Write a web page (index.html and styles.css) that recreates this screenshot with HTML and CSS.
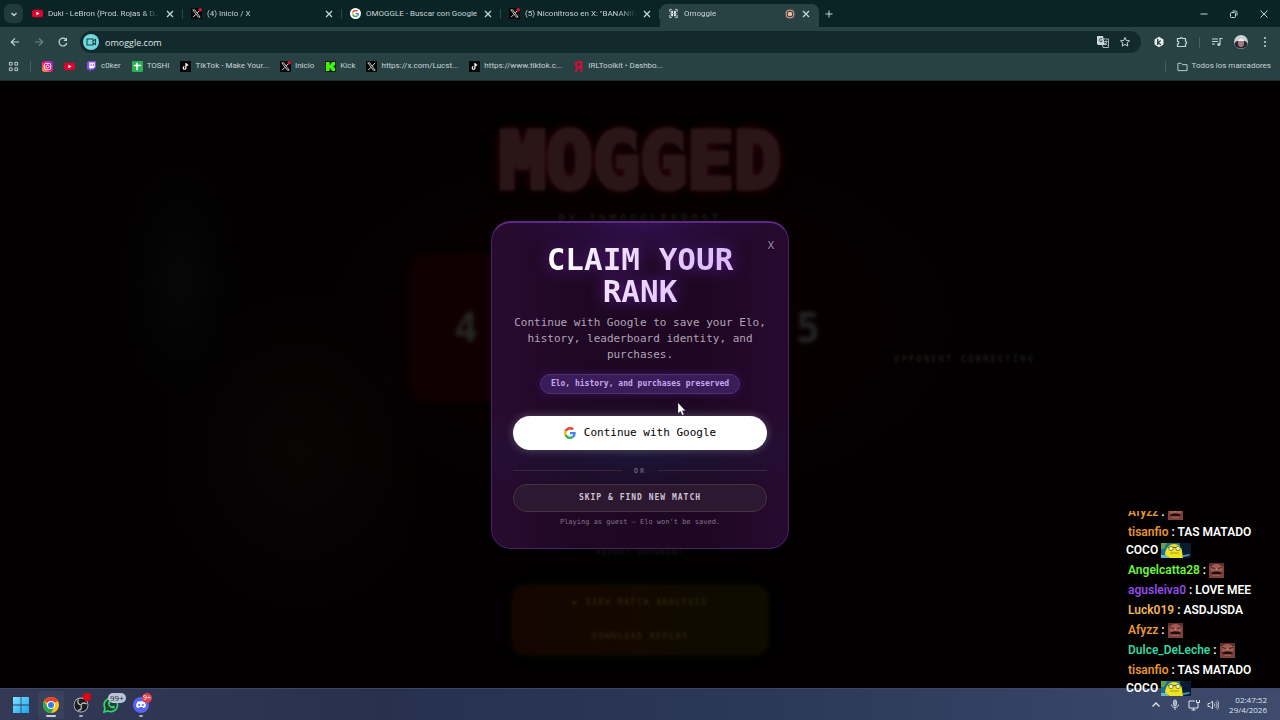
FILE: index.html
```
<!DOCTYPE html>
<html lang="es">
<head>
    <meta charset="UTF-8">
    <meta name="viewport" content="width=device-width, initial-scale=1.0">
    <title>Omoggle</title>
    <link rel="stylesheet" href="styles.css">
</head>
<body>
    <!-- Shared icons -->
    <svg class="sprite" aria-hidden="true">
        <symbol id="close" viewBox="0 0 12 12"><path d="M3 3l6 6M9 3l-6 6" fill="none" stroke="currentColor" stroke-width="1.3"/></symbol>
        <symbol id="x-logo" viewBox="0 0 12 12"><rect width="12" height="12" fill="#050505"/><path d="M2 2h2l6 8H8z" fill="none" stroke="#e8e8e8" stroke-width=".9"/><path d="M10 2L6.800 5.500M5.300 7L2.300 10" stroke="#e8e8e8" stroke-width="1"/></symbol>
        <symbol id="red-dot" viewBox="0 0 4 4"><circle cx="2" cy="2" r="2" fill="#e5123c"/></symbol>
        <symbol id="youtube" viewBox="0 0 12 12"><rect y="1.800" width="12" height="8.400" rx="2.200" fill="#e3002d"/><path d="M4.800 4v4l3.500-2z" fill="#fff"/></symbol>
        <symbol id="tiktok" viewBox="0 0 12 12"><rect width="12" height="12" fill="#050505"/><path d="M6.500 2.200v5.200a1.500 1.500 0 1 1-1.600-1.400M6.500 2.500c.2 1.300 1.200 2 2.500 2" fill="none" stroke="#fff" stroke-width="1.300"/></symbol>
        <symbol id="google" viewBox="0 0 48 48"><path fill="#EA4335" d="M24 9.500c3.540 0 6.710 1.220 9.210 3.600l6.850-6.850C35.900 2.380 30.470 0 24 0 14.620 0 6.510 5.380 2.560 13.220l7.980 6.190C12.430 13.720 17.740 9.500 24 9.500z"/><path fill="#4285F4" d="M46.980 24.550c0-1.570-.15-3.090-.38-4.550H24v9.020h12.940c-.58 2.960-2.260 5.480-4.780 7.180l7.730 6c4.510-4.180 7.090-10.360 7.090-17.650z"/><path fill="#FBBC05" d="M10.530 28.590c-.48-1.450-.76-2.990-.76-4.590s.27-3.140.76-4.590l-7.980-6.190C.92 16.460 0 20.120 0 24c0 3.880.92 7.540 2.560 10.780l7.970-6.190z"/><path fill="#34A853" d="M24 48c6.480 0 11.930-2.130 15.890-5.810l-7.730-6c-2.150 1.450-4.920 2.300-8.160 2.300-6.260 0-11.570-4.220-13.470-9.910l-7.980 6.190C6.510 42.620 14.620 48 24 48z"/></symbol>
        <symbol id="emote-face" viewBox="0 0 15 15"><rect width="15" height="15" fill="#7d403b"/><path d="M0 0h15v3H0z" fill="#5c2d2a"/><ellipse cx="7.500" cy="6" rx="6" ry="5" fill="#a35a50"/><path d="M2 4.500l4 1M13 4.500l-4 1" stroke="#4a2322"/><path d="M7.500 5v2.500" stroke="#c07a6b"/><path d="M2 10.500c1-3 10-3 11 0-3 .8-8 .8-11 0z" fill="#1c0e10"/><path d="M4 12.500h7" stroke="#a35a50"/></symbol>
        <symbol id="emote-bird" viewBox="0 0 30 15"><rect width="22" height="15" fill="#1c6f93"/><path d="M19 0h11v15H19z" fill="#071c33"/><path d="M0 0h6L3 6H0z" fill="#5fa34c"/><path d="M0 12h10l-3 3H0z" fill="#65b8c9"/><path d="M4 11C5 4 9 1 13 1s8 3 8 7l1 7H8c0-2-3-2-4-4z" fill="#efe321"/><path d="M22 12l7-1-1 2-6 1z" fill="#4692bd"/><path d="M7 4.500h13" stroke="#5c6230"/><circle cx="10" cy="5.500" r="2.200" fill="#eef2bd" stroke="#6d7026" stroke-width=".8"/><circle cx="17" cy="5.500" r="2.200" fill="#eef2bd" stroke="#6d7026" stroke-width=".8"/><path d="M9 10h9" fill="none" stroke="#a59e13"/></symbol>
    </svg>

    <header class="browser">
        <div class="tab-strip">
            <button class="tab-search" aria-label="Buscar pestañas"><svg viewBox="0 0 12 12"><path d="M3.500 5L6 7.500 8.500 5" fill="none" stroke="currentColor" stroke-width="1.400"/></svg></button>
            <div class="tab">
                <svg class="favicon"><use href="#youtube"/></svg>
                <a href="#" class="tab-title">Duki - LeBron (Prod. Rojas &amp; DJ</a>
                <button class="tab-close" aria-label="Cerrar"><svg><use href="#close"/></svg></button>
            </div>
            <div class="tab">
                <svg class="favicon" viewBox="0 0 12 12"><use href="#x-logo"/><use href="#red-dot" x="8" width="4" height="4"/></svg>
                <a href="#" class="tab-title">(4) Inicio / X</a>
                <button class="tab-close" aria-label="Cerrar"><svg><use href="#close"/></svg></button>
            </div>
            <div class="tab">
                <svg class="favicon" viewBox="0 0 12 12"><circle cx="6" cy="6" r="6" fill="#fff"/><use href="#google" x="2" y="2" width="8" height="8"/></svg>
                <a href="#" class="tab-title full">OMOGGLE - Buscar con Google</a>
                <button class="tab-close" aria-label="Cerrar"><svg><use href="#close"/></svg></button>
            </div>
            <div class="tab">
                <svg class="favicon" viewBox="0 0 12 12"><use href="#x-logo"/><use href="#red-dot" x="8" width="4" height="4"/></svg>
                <a href="#" class="tab-title">(5) Niconitroso en X: "BANANIR</a>
                <button class="tab-close" aria-label="Cerrar"><svg><use href="#close"/></svg></button>
            </div>
            <div class="tab active">
                <svg class="favicon" viewBox="0 0 12 12"><path d="M4 1.500H2v3M8 1.500h2v3M4 10.500H2v-3M8 10.500h2v-3" fill="none" stroke="#dbe5e5"/><path d="M4.500 3v6M7.500 3v6" stroke="#eef3f3" stroke-width="2"/><path d="M2 6h8" stroke="#9fb0b0"/></svg>
                <a href="#" class="tab-title">Omoggle</a>
                <svg class="recording" viewBox="0 0 10 10"><circle cx="5" cy="5" r="4" fill="none" stroke="#dda99c"/><circle cx="5" cy="5" r="2.300" fill="#f4b5a5"/></svg>
                <button class="tab-close" aria-label="Cerrar"><svg><use href="#close"/></svg></button>
            </div>
            <button class="new-tab" aria-label="Nueva pestaña"><svg viewBox="0 0 12 12"><path d="M6 2.500v7M2.500 6h7" stroke="currentColor"/></svg></button>
            <div class="window-buttons">
                <button aria-label="Minimizar"><svg viewBox="0 0 12 12"><path d="M2.500 6h7" stroke="currentColor"/></svg></button>
                <button aria-label="Restaurar"><svg viewBox="0 0 12 12"><rect x="2.500" y="4.500" width="5" height="5" rx="1" fill="none" stroke="currentColor"/><path d="M4.500 3h3a1.500 1.500 0 0 1 1.500 1.500v3" fill="none" stroke="currentColor"/></svg></button>
                <button aria-label="Cerrar ventana"><svg viewBox="0 0 12 12"><path d="M2.500 2.500l7 7M9.500 2.500l-7 7" stroke="currentColor"/></svg></button>
            </div>
        </div>

        <div class="toolbar">
            <button class="tool" aria-label="Atrás"><svg viewBox="0 0 12 12"><path d="M10 6H2.500M6 2.300L2.300 6 6 9.700" fill="none" stroke="currentColor" stroke-width="1.200"/></svg></button>
            <button class="tool dim" aria-label="Adelante"><svg viewBox="0 0 12 12"><path d="M2 6h7.500M6 2.300L9.700 6 6 9.700" fill="none" stroke="currentColor" stroke-width="1.200"/></svg></button>
            <button class="tool" aria-label="Recargar"><svg viewBox="0 0 12 12"><path d="M9.300 4A3.900 3.900 0 1 0 9.800 7" fill="none" stroke="currentColor" stroke-width="1.200"/><path d="M10 1.500V5H6.500z" fill="currentColor"/></svg></button>
            <div class="omnibox">
                <button class="site-info" aria-label="Cámara en uso"><svg viewBox="0 0 12 12"><path d="M2 3h6v6H2zM8 5l2.500-1.500v5L8 7" fill="none" stroke="currentColor" stroke-width="1.100"/></svg></button>
                <input type="text" class="address" aria-label="Dirección" value="omoggle.com">
                <button class="tool small" aria-label="Traducir"><svg viewBox="0 0 12 12"><path d="M0 0h6l2 9H1L0 8z" fill="#cbd8d8"/><path d="M5 3a1.600 1.600 0 1 0 .3 2H3.800" fill="none" stroke="#203738" stroke-width=".9"/><path d="M7 3h4.500v8.500H6L5.500 9M7.500 5.500h3M9 4.500v1M10 5.500C9.700 7 9 8 8 9M8 7l2.500 2.500" fill="none" stroke="#cbd8d8" stroke-width=".8"/></svg></button>
                <button class="tool small" aria-label="Añadir a marcadores"><svg viewBox="0 0 12 12"><path d="M6 1.500l1.300 3 3.200.3-2.400 2.100.7 3.200L6 8.400l-2.800 1.700.7-3.200-2.400-2.100 3.200-.3z" fill="none" stroke="currentColor"/></svg></button>
            </div>
            <div class="extensions">
                <button class="tool small" aria-label="Extensión Kick"><svg viewBox="0 0 12 12"><path d="M6 .8l4.500 2.600v5.200L6 11.200 1.500 8.600V3.400z" fill="#e4eded"/><path d="M4.700 3v6M7.700 4.500L5 6.500l2.800 2.200" fill="none" stroke="#223b3c" stroke-width="1.200"/></svg></button>
                <button class="tool small" aria-label="Extensiones"><svg viewBox="0 0 12 12"><path d="M1.500 2.500h3a1 1 0 0 1 2 0h3v3a1.200 1.200 0 0 1 0 2.400v2.600h-8V8a1.200 1.200 0 0 0 0-2.600z" fill="none" stroke="currentColor" stroke-width="1.200"/></svg></button>
                <span class="divider"></span>
                <button class="tool small" aria-label="Multimedia"><svg viewBox="0 0 12 12"><path d="M1 3h6M1 5.500h6M1 8h3M9 8.500V2.500h2.500" fill="none" stroke="currentColor" stroke-width="1.100"/><circle cx="7.800" cy="8.500" r="1.500" fill="currentColor"/></svg></button>
                <button class="tool small" aria-label="Perfil"><svg class="avatar" viewBox="0 0 14 14"><circle cx="7" cy="7" r="7" fill="#c9d1d1"/><path d="M.5 9C1 4 13 4 13.500 9c-1 6-12 6-13 0z" fill="#292932"/><ellipse cx="7" cy="8" rx="3" ry="4" fill="#a77d7c"/><path d="M3.500 6c1-3 6-3 7 0z" fill="#eef0ef"/></svg></button>
                <button class="tool small" aria-label="Menú"><svg viewBox="0 0 12 12"><circle cx="6" cy="2" r="1" fill="currentColor"/><circle cx="6" cy="6" r="1" fill="currentColor"/><circle cx="6" cy="10" r="1" fill="currentColor"/></svg></button>
            </div>
        </div>

        <nav class="bookmarks">
            <button class="apps" aria-label="Aplicaciones"><svg viewBox="0 0 12 12"><path d="M1.500 1.500h3v3h-3zM7.500 1.500h3v3h-3zM1.500 7.500h3v3h-3zM7.500 7.500h3v3h-3z" fill="none" stroke="currentColor"/></svg></button>
            <span class="divider"></span>
            <a href="#" aria-label="Instagram"><svg viewBox="0 0 12 12"><defs><linearGradient id="insta" x1="1" y1="0" x2="0" y2="1"><stop stop-color="#8b2be8"/><stop offset=".5" stop-color="#f4127b"/><stop offset="1" stop-color="#ffb01f"/></linearGradient></defs><rect width="12" height="12" rx="3" fill="url(#insta)"/><rect x="2.500" y="2.500" width="7" height="7" rx="2" fill="none" stroke="#fff"/><circle cx="6" cy="6" r="1.700" fill="none" stroke="#fff"/></svg></a>
            <a href="#" aria-label="YouTube"><svg><use href="#youtube"/></svg></a>
            <a href="#"><svg viewBox="0 0 12 12"><path d="M2.500 0H11v7L8.500 9.500H6L4 12V9.500H1V2z" fill="#8b4be8"/><path d="M3.500 1.500h6v5l-1.500 1.500H6L5 9V8H3.500z" fill="#fff"/><path d="M5.500 3v2.500M8 3v2.500" stroke="#8b4be8"/></svg>c0ker</a>
            <a href="#"><svg viewBox="0 0 12 12"><rect width="12" height="12" rx="1" fill="#2cae52"/><path d="M2 5h8M5.500 2v8" stroke="#fff" stroke-width="1.600"/></svg>TOSHI</a>
            <a href="#"><svg><use href="#tiktok"/></svg>TikTok - Make Your...</a>
            <a href="#"><svg viewBox="0 0 12 12"><use href="#x-logo"/><use href="#red-dot" x="8" width="4" height="4"/></svg>Inicio</a>
            <a href="#"><svg viewBox="0 0 12 12"><rect width="12" height="12" fill="#101f0d"/><path d="M1 1h4v3h1V2.500h1.500V1H11v4H9.500v2H11v4H7.500V9.500H6V8H5v3H1z" fill="#43f50c"/></svg>Kick</a>
            <a href="#"><svg><use href="#x-logo"/></svg>https://x.com/Lucst...</a>
            <a href="#"><svg><use href="#tiktok"/></svg>https://www.tiktok.c...</a>
            <a href="#"><svg viewBox="0 0 12 12"><path d="M9 0v12M9 1.200H5.500a2.500 2.500 0 0 0 0 5H9M6 6.500L2.500 12" fill="none" stroke="#d90b35" stroke-width="2.300"/></svg>IRLToolkit • Dashbo...</a>
            <span class="divider push"></span>
            <a href="#"><svg viewBox="0 0 12 12"><path d="M1 2.500h3.500L6 4h5v6.500H1z" fill="none" stroke="currentColor"/></svg>Todos los marcadores</a>
        </nav>
    </header>

    <main>
        <!-- Match result, dimmed behind the dialog -->
        <section class="result" aria-hidden="true">
            <div class="camera"></div>
            <div class="scoreboard">
                <h2 class="verdict">MOGGED</h2>
                <p class="winner">BY INMOGGLEFROST</p>
                <div class="scores">
                    <div class="score loser">4</div>
                    <div class="score">5</div>
                </div>
                <p class="report">REPORT OPPONENT</p>
                <div class="result-actions">
                    <span>▶ VIEW MATCH ANALYSIS</span>
                    <span>DOWNLOAD REPLAY</span>
                </div>
            </div>
            <p class="opponent">OPPONENT CONNECTING</p>
        </section>

        <section class="modal" role="dialog" aria-labelledby="claimTitle">
            <button class="modal-close" aria-label="Close">X</button>
            <h1 id="claimTitle">CLAIM YOUR RANK</h1>
            <p class="lead">Continue with Google to save your Elo, history, leaderboard identity, and purchases.</p>
            <p class="pill">Elo, history, and purchases preserved</p>
            <button class="btn-google"><svg><use href="#google"/></svg>Continue with Google</button>
            <div class="or">OR</div>
            <button class="btn-skip">SKIP &amp; FIND NEW MATCH</button>
            <p class="note">Playing as guest — Elo won't be saved.</p>
        </section>

        <svg class="cursor" viewBox="0 0 9 14" aria-hidden="true"><path d="M1 .8v10.700l2.500-2.200 1.700 3.900 1.800-.8-1.700-3.700h3.200z" fill="#fff" stroke="#201426" stroke-width=".3"/></svg>
    </main>

    <!-- Stream chat overlay -->
    <aside class="chat">
        <p><b class="orange">Afyzz</b> : <svg class="face"><use href="#emote-face"/></svg></p>
        <p><b class="orange">tisanfio</b> : TAS MATADO<br>COCO <svg class="bird"><use href="#emote-bird"/></svg></p>
        <p><b class="green">Angelcatta28</b> : <svg class="face"><use href="#emote-face"/></svg></p>
        <p><b class="purple">agusleiva0</b> : LOVE MEE</p>
        <p><b class="gold">Luck019</b> : ASDJJSDA</p>
        <p><b class="orange">Afyzz</b> : <svg class="face"><use href="#emote-face"/></svg></p>
        <p><b class="teal">Dulce_DeLeche</b> : <svg class="face"><use href="#emote-face"/></svg></p>
        <p><b class="orange">tisanfio</b> : TAS MATADO<br>COCO <svg class="bird"><use href="#emote-bird"/></svg></p>
    </aside>

    <footer class="taskbar">
        <button class="app" aria-label="Inicio"><svg viewBox="0 0 16 16"><defs><linearGradient id="win" x2="1" y2="1"><stop stop-color="#80e3ff"/><stop offset="1" stop-color="#16a5ed"/></linearGradient></defs><path d="M0 0h7.600v7.600H0zM8.400 0H16v7.600H8.400zM0 8.400h7.600V16H0zM8.400 8.400H16V16H8.400z" fill="url(#win)"/></svg></button>
        <button class="app current" aria-label="Chrome"><svg viewBox="0 0 16 16"><circle cx="8" cy="8" r="8" fill="#fbc51b"/><path d="M8 8L1.100 4A8 8 0 0 1 14.900 4z" fill="#e8402f"/><path d="M1.100 4A8 8 0 0 0 8 16l3.400-6H4.600z" fill="#25a650"/><circle cx="8" cy="8" r="4" fill="#fff"/><circle cx="8" cy="8" r="3" fill="#347be8"/></svg></button>
        <button class="app open" aria-label="OBS"><svg viewBox="0 0 16 16"><circle cx="8" cy="8" r="7.400" fill="#c4c6ca"/><circle cx="8" cy="8" r="6.600" fill="#1b1b1e"/><path d="M5.500 2.500c-1.500 2.500-.5 4.500 2 5.500M13.500 7c-2.500-1.800-5-1-5.500 1.200M5 13c3 .3 4.200-2 3-4.600" fill="none" stroke="#c4c6ca" stroke-width="1.300"/></svg><span class="badge dot"></span></button>
        <button class="app" aria-label="WhatsApp"><svg viewBox="0 0 16 16"><path d="M1 15l1-3.800A6.700 6.700 0 1 1 5 14z" fill="#213d3f" stroke="#32d564" stroke-width="1.700"/><path d="M5 4.500l1.500-.2.8 2-.8 1c.6 1.200 1.500 1.800 2.500 2.200l1-.9 2 1c-.3 2-1.500 2.200-3 1.700C6.500 10.500 4.500 8 5 4.500z" fill="#32d564"/></svg><span class="badge">99+</span></button>
        <button class="app open" aria-label="Discord"><svg viewBox="0 0 16 16"><circle cx="8" cy="8" r="8" fill="#5865f2"/><path d="M4.500 4.800C6 4 10 4 11.500 4.800c1 1.600 1.500 3.200 1.300 5-1 .9-1.800 1.200-2.500 1.300l-.7-1H6.400l-.7 1c-.7-.1-1.500-.4-2.500-1.300-.2-1.800.3-3.400 1.300-5z" fill="#fff"/><circle cx="6.200" cy="8" r="1.100" fill="#5865f2"/><circle cx="9.800" cy="8" r="1.100" fill="#5865f2"/></svg><span class="badge red">9+</span></button>
        <div class="tray">
            <button aria-label="Iconos ocultos"><svg viewBox="0 0 12 12"><path d="M2.500 7.500L6 4l3.500 3.500" fill="none" stroke="currentColor" stroke-width="1.300"/></svg></button>
            <button aria-label="Micrófono"><svg viewBox="0 0 12 12"><rect x="4.500" y="1" width="3" height="6" rx="1.500" fill="#9aa4bc" stroke="currentColor" stroke-width=".8"/><path d="M2.500 5.500c0 4 7 4 7 0M6 8.500V11" fill="none" stroke="currentColor" stroke-width=".9"/></svg></button>
            <button aria-label="Red"><svg viewBox="0 0 12 12"><path d="M7 2H1v7h9V7M3.500 11h4M5.500 9v2M8.500 1v2.500h3V1M10 3.500V7" fill="none" stroke="currentColor"/></svg></button>
            <button aria-label="Volumen"><svg viewBox="0 0 12 12"><path d="M1 4.500h2L5.500 2v8L3 7.500H1zM7 4.500c1 .8 1 2.200 0 3M8.500 3c2 1.700 2 4.300 0 6M10 1.500c2.500 2.500 2.500 6.500 0 9" fill="none" stroke="currentColor" stroke-width=".9"/></svg></button>
            <time class="clock">02:47:52<br>29/4/2026</time>
        </div>
    </footer>
</body>
</html>
```
FILE: styles.css
```
:root {
    --strip: #0a2425;
    --toolbar: #284142;
    --field: #132a2c;
    --chrome-text: #c6d5d5;
    --ui-font: "Open Sans", "Noto Sans", sans-serif;
    --tab-font: Roboto, "Open Sans", sans-serif;
    --mono: "DejaVu Sans Mono", "Liberation Mono", monospace;
}

* {
    margin: 0;
    padding: 0;
    box-sizing: border-box;
}

body {
    display: flex;
    flex-direction: column;
    min-height: 100vh;
    position: relative;
    overflow: hidden;
    background: #000;
    font-family: var(--ui-font);
}

a {
    color: inherit;
    text-decoration: none;
}

button {
    font-family: inherit;
    color: inherit;
    background: none;
    border: none;
    cursor: pointer;
}

svg {
    display: block;
    flex-shrink: 0;
}

.sprite {
    position: absolute;
    width: 0;
    height: 0;
}

/* Browser window */
.browser {
    color: var(--chrome-text);
    background: var(--toolbar);
    font-family: var(--tab-font);
    font-size: 8px;
    border-bottom: 1px solid #1a2b2c;
}

.tab-strip {
    display: flex;
    align-items: center;
    height: 27px;
    padding-left: 4px;
    background: var(--strip);
}

.tab-search {
    display: grid;
    place-items: center;
    width: 19px;
    height: 19px;
    margin-right: 1px;
    border-radius: 6px;
    background: #203b3c;
}

.tab-search svg,
.new-tab svg,
.tab-close svg,
.window-buttons svg {
    width: 12px;
    height: 12px;
}

.tab {
    display: flex;
    align-items: center;
    flex: 0 1 159px;
    min-width: 0;
    height: 23px;
    margin-top: 4px;
    padding: 0 7px 4px 8px;
    background: linear-gradient(#2c4647, #2c4647) right 5px / 1px 10px no-repeat;
}

.tab.active {
    background: var(--toolbar);
    border-radius: 7px 7px 0 0;
}

.favicon {
    width: 11px;
    height: 11px;
    margin-right: 5px;
}

.tab-title {
    flex: 1;
    min-width: 0;
    margin-right: 5px;
    overflow: hidden;
    white-space: nowrap;
    line-height: 12px;
    -webkit-mask-image: linear-gradient(90deg, #000 85%, transparent);
    mask-image: linear-gradient(90deg, #000 85%, transparent);
}

.tab-title.full {
    -webkit-mask-image: none;
    mask-image: none;
}

.recording {
    width: 10px;
    height: 10px;
    margin-right: 5px;
    border-radius: 5px;
    box-shadow: 0 0 1px #d55;
}

.new-tab {
    padding: 0 4px;
}

.window-buttons {
    display: flex;
    gap: 18px;
    margin-left: auto;
    padding-right: 10px;
}

.toolbar {
    display: flex;
    align-items: center;
    height: 30px;
    padding: 0 9px;
    gap: 12px;
}

.tool svg {
    width: 12px;
    height: 12px;
}

.tool .avatar {
    width: 14px;
    height: 14px;
}

.dim {
    opacity: 0.45;
}

.omnibox {
    display: flex;
    align-items: center;
    flex: 1;
    gap: 10px;
    height: 22px;
    margin-left: -1px;
    padding: 0 10px 0 3px;
    border-radius: 11px;
    background: var(--field);
}

.site-info {
    display: grid;
    place-items: center;
    width: 16px;
    height: 16px;
    border-radius: 8px;
    color: #16494d;
    background: #74d9df;
}

.site-info svg {
    width: 12px;
    height: 12px;
}

.address {
    flex: 1;
    min-width: 0;
    margin-left: -4px;
    border: none;
    outline: none;
    background: none;
    color: #dce7e7;
    font-family: var(--ui-font);
    font-size: 9px;
}

.extensions {
    display: flex;
    align-items: center;
    gap: 11px;
}

.divider {
    width: 1px;
    height: 11px;
    background: #456061;
}

.bookmarks {
    display: flex;
    align-items: center;
    gap: 11px;
    height: 23px;
    padding: 0 9px 5px 8px;
    white-space: nowrap;
}

.bookmarks a {
    display: flex;
    align-items: center;
    gap: 4px;
    line-height: 12px;
}

.bookmarks svg {
    width: 11px;
    height: 11px;
}

.bookmarks .push {
    margin-left: auto;
}

/* Match result */
main {
    display: grid;
    flex: 1;
    place-items: center;
    position: relative;
    overflow: hidden;
    background: #020000;
    font-family: var(--mono);
}

main > .result,
main > .modal {
    grid-area: 1 / 1;
}

.result {
    display: grid;
    grid-template-columns: 1fr 460px 1fr;
    width: 100%;
    height: 100%;
    background: radial-gradient(ellipse at 50% 40%, #0b0002 0, transparent 45%);
}

.camera {
    background:
        radial-gradient(ellipse 60px 120px at 180px 200px, #070707, transparent),
        radial-gradient(ellipse 140px 160px at 300px 370px, #080505, transparent);
}

.scoreboard {
    display: flex;
    flex-direction: column;
    align-items: center;
    padding-top: 38px;
}

.verdict {
    padding: 0 4px;
    font-size: 78px;
    line-height: 84px;
    color: #2a1517;
    -webkit-text-stroke: 5px #2a1517;
    text-shadow: 0 0 8px #3a0610, 0 0 16px #2a040a;
    filter: blur(1px);
}

.winner {
    margin-top: 6px;
    font-size: 12px;
    letter-spacing: 3px;
    line-height: 20px;
    font-weight: bold;
    color: #1d1717;
    filter: blur(1px);
}

.scores {
    display: flex;
    justify-content: space-between;
    width: 100%;
    margin-top: 26px;
}

.score {
    width: 210px;
    height: 146px;
    padding: 0 50px;
    border-radius: 18px;
    font-size: 40px;
    line-height: 146px;
    font-weight: bold;
    text-align: right;
    color: #262626;
    filter: blur(2px);
}

.score.loser {
    text-align: left;
    padding: 0 44px;
    background: #100002;
    box-shadow: 0 0 6px #140002;
}

.report {
    margin-top: 144px;
    font-size: 8px;
    letter-spacing: 1px;
    line-height: 16px;
    color: #1d1d1d;
    filter: blur(1px);
}

.result-actions {
    display: flex;
    flex-direction: column;
    align-items: center;
    width: 256px;
    height: 70px;
    margin-top: 24px;
    border-radius: 14px;
    font-size: 9px;
    letter-spacing: 1px;
    line-height: 34px;
    font-weight: bold;
    color: #292008;
    background: linear-gradient(90deg, #150500, #130900 50%, #0c0d00);
    box-shadow: 0 0 8px #0e0c00;
    filter: blur(1px);
}

.opponent {
    padding: 270px 0 0 24px;
    font-size: 9px;
    letter-spacing: 2px;
    line-height: 16px;
    font-weight: bold;
    color: #1c1a1a;
    white-space: nowrap;
    filter: blur(1px);
}

/* Claim dialog */
.modal {
    display: flex;
    flex-direction: column;
    align-items: center;
    position: relative;
    width: 100%;
    max-width: 298px;
    padding: 20px 21px 19px;
    border: 1px solid #45206b;
    border-top: 2px solid #5f2787;
    border-radius: 20px;
    text-align: center;
    background:
        radial-gradient(ellipse 130px 40px at 50% 0, #32104f, transparent),
        radial-gradient(ellipse 200px 50px at 50% 70%, #1c1637, transparent),
        linear-gradient(90deg, #2a0a31, #1e0823 30%, #1e0722 70%, #280a30);
}

.modal-close {
    position: absolute;
    top: 15px;
    right: 12px;
    width: 10px;
    height: 14px;
    font-family: var(--ui-font);
    font-size: 11px;
    line-height: 14px;
    color: #a598ab;
}

.modal h1 {
    font-size: 31px;
    line-height: 32px;
    color: transparent;
    background: linear-gradient(100deg, #fff 15%, #eed9ff 45%, #d2adfa);
    -webkit-background-clip: text;
    background-clip: text;
    filter: drop-shadow(0 0 8px #5b1c90);
}

.lead {
    margin-top: 8px;
    font-size: 11px;
    line-height: 16px;
    color: #b3a3ba;
}

.pill {
    margin-top: 11px;
    padding: 0 10px;
    border: 1px solid #513078;
    border-radius: 10px;
    font-size: 8px;
    line-height: 18px;
    font-weight: bold;
    color: #c8a6f4;
    background: #3a1c58;
    box-shadow: 0 0 8px #36125a;
}

.btn-google {
    display: flex;
    align-items: center;
    justify-content: center;
    gap: 8px;
    width: 100%;
    height: 34px;
    margin-top: 22px;
    border-radius: 17px;
    font-size: 11px;
    color: #000;
    background: #fff;
    box-shadow: 0 0 10px #ffffff44;
}

.btn-google svg {
    width: 12px;
    height: 12px;
}

.or {
    display: flex;
    align-items: center;
    gap: 12px;
    width: 100%;
    margin: 13px 0 5px;
    font-size: 7px;
    line-height: 16px;
    letter-spacing: 2px;
    font-weight: bold;
    color: #655a70;
}

.or::before,
.or::after {
    content: "";
    flex: 1;
    height: 1px;
    background: #39263f;
}

.btn-skip {
    width: 100%;
    height: 28px;
    border: 1px solid #473347;
    border-radius: 14px;
    font-size: 8px;
    letter-spacing: 1px;
    font-weight: bold;
    color: #cfc3d4;
    background: #2d1831;
}

.note {
    margin-top: 4px;
    font-size: 7px;
    line-height: 13px;
    color: #86738e;
}

.cursor {
    position: absolute;
    top: 321px;
    left: calc(50% + 37px);
    width: 9px;
    height: 14px;
}

/* Stream chat */
.chat {
    display: flex;
    flex-direction: column;
    justify-content: flex-end;
    position: absolute;
    right: 24px;
    bottom: 22px;
    z-index: 2;
    width: 130px;
    height: 187px;
    overflow: hidden;
    font-family: Roboto, sans-serif;
    font-size: 12px;
    font-weight: 600;
    line-height: 18px;
    color: #fff;
    white-space: nowrap;
}

.chat b {
    font-weight: inherit;
}

.chat p {
    flex-shrink: 0;
    padding: 1px 0;
    text-indent: 2px;
}

.chat svg {
    display: inline-block;
    height: 15px;
    vertical-align: -4px;
}

.chat .face {
    width: 15px;
}

.chat .bird {
    width: 30px;
}

.orange { color: #e8962d; }
.green { color: #6df53c; }
.purple { color: #8f4be6; }
.gold { color: #f0b45c; }
.teal { color: #35d6a4; }

/* Taskbar */
.taskbar {
    display: flex;
    align-items: center;
    height: 32px;
    padding: 0 13px 0 8px;
    gap: 4px;
    border-top: 1px solid #3c4766;
    background: linear-gradient(90deg, #343a55, #27304f 30%, #2b3858 60%, #3e4b6d);
    color: #dfe4ee;
}

.app {
    display: grid;
    place-items: center;
    position: relative;
    width: 26px;
    height: 28px;
}

.app svg {
    width: 16px;
    height: 16px;
}

.app.current {
    border-radius: 3px;
    background: #39415b;
}

.app.current::after,
.app.open::after {
    content: "";
    position: absolute;
    bottom: 2px;
    width: 4px;
    height: 2px;
    border-radius: 1px;
    background: #a6adbc;
}

.app.current::after {
    width: 10px;
    background: #c5cee0;
}

.badge {
    position: absolute;
    top: 2px;
    left: 10px;
    padding: 0 2px;
    border-radius: 5px;
    font-size: 8px;
    line-height: 10px;
    color: #1b2533;
    background: #b9c5d5;
}

.badge.dot {
    left: 15px;
    width: 8px;
    height: 8px;
    background: #e60012;
}

.badge.red {
    left: 14px;
    padding: 0 1px;
    font-size: 7px;
    color: #fff;
    background: #dc3c4b;
}

.tray {
    display: flex;
    align-items: center;
    gap: 7px;
    margin-left: auto;
}

.tray svg {
    width: 12px;
    height: 12px;
}

.clock {
    margin-left: 3px;
    font-size: 8px;
    line-height: 10px;
    text-align: right;
}
```
